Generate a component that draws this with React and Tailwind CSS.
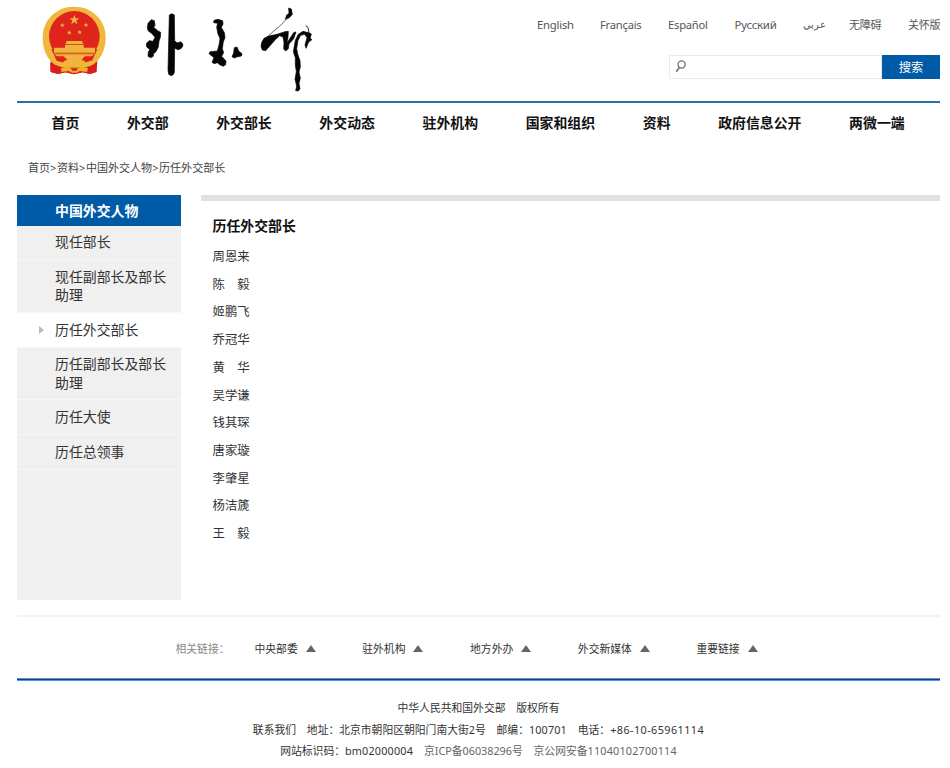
import React from 'react';

const languages = [
  { label: 'English', box: 'w-[63px] text-[11.3px]' },
  { label: 'Français', box: 'w-[68px] text-[11.2px]' },
  { label: 'Español', box: 'w-[66.5px] text-[11.2px]' },
  { label: 'Русский', box: 'w-[68.5px] text-[11.4px]' },
  { label: 'عربي', box: 'w-[46px] text-[9.5px]' },
  { label: '无障碍', box: 'w-[59px] text-[11px]' },
  { label: '关怀版', box: 'w-[34px] text-[11px]' },
];

const navItems = ['首页', '外交部', '外交部长', '外交动态', '驻外机构', '国家和组织', '资料', '政府信息公开', '两微一端'];

const sideItems = [
  { label: '现任部长' },
  { label: '现任副部长及部长助理' },
  { label: '历任外交部长', active: true },
  { label: '历任副部长及部长助理' },
  { label: '历任大使' },
  { label: '历任总领事' },
];

const ministers = ['周恩来', '陈　毅', '姬鹏飞', '乔冠华', '黄　华', '吴学谦', '钱其琛', '唐家璇', '李肇星', '杨洁篪', '王　毅'];

const footerLinks = ['中央部委', '驻外机构', '地方外办', '外交新媒体', '重要链接'];

const star = 'M0 -10 L2.4 -3.2 L9.5 -3.1 L3.8 1.2 L5.9 8.1 L0 4 L-5.9 8.1 L-3.8 1.2 L-9.5 -3.1 L-2.4 -3.2 Z';

function Emblem() {
  return (
    <svg className="block h-[90px] w-[90px]" viewBox="0 0 270 270" aria-hidden="true">
      <path d="M62 180 L88 198 L180 198 L202 178 L199 216 L180 222 L158 217 L132 223 L106 217 L84 222 L62 216 Z" fill="#d8211d" />
      <path d="M132 20 C187 20 227 60 227 113 C227 148 213 176 189 194 L165 203 L100 203 L74 194 C50 175 38 148 38 113 C38 60 78 20 132 20 Z" fill="#efb83c" />
      <ellipse cx="133" cy="109" rx="76" ry="76" fill="#df241c" />
      <path d="M64 148 L80 182 L108 190 L160 190 L187 181 L202 148 Z" fill="#df241c" />
      <g fill="#efb53c">
        <path d={star} transform="translate(133 60) scale(1.55)" />
        <path d={star} transform="translate(97 76) scale(.75)" />
        <path d={star} transform="translate(168 75) scale(.75)" />
        <path d={star} transform="translate(118 98) scale(.75)" />
        <path d={star} transform="translate(149 97) scale(.75)" />
        <path d="M110 123 H156 L160 132 H106 Z M105 134 H161 V143 H195 V158 H72 V143 H105 Z" />
      </g>
      <path d="M72 160 H195" stroke="#d99025" strokeWidth="2" />
      <path d="M72 163 H195 L184 169 H165 L151 184 H116 L101 169 H82 Z" fill="#efb53c" />
      <path d="M98 190 C104 174 118 182 133 182 C148 182 162 174 168 190 L152 194 H114 Z" fill="#efb53c" />
      <path d="M60 188 L88 200 L112 203 H154 L180 200 L202 188 L199 216 L180 222 L158 217 L132 223 L106 217 L84 222 L62 216 Z" fill="#d8211d" />
      <path d="M92 205 L112 198 L118 203 H148 L154 198 L174 205 L171 216 L150 213 L140 218 H126 L116 213 L95 216 Z" fill="#efb02c" />
      <path d="M122 205 H144 L139 212 H127 Z" fill="#d8211d" />
    </svg>
  );
}

function Calligraphy() {
  return (
    <svg className="block h-[100px] w-[200px]" viewBox="0 0 600 300" aria-hidden="true" fill="#050505" stroke="#050505" strokeWidth="2" strokeLinejoin="round">
      <path d="M64 59 L73 62 L75 76 L71 82 L83 92 L92 97 L91 112 L87 123 L85 141 L78 155 L70 162 L70 169 L62 173 L54 169 L55 157 L59 148 L50 141 L49 130 L58 122 L69 124 L75 112 L66 101 L55 93 L52 84 L54 70 Z" />
      <path d="M118 45 Q125 38 133 45 L134 122 Q141 133 151 125 Q162 130 158 139 Q154 149 143 149 L134 144 L133 216 Q132 226 123 227 L116 223 L114 211 Z" />
      <path d="M252 61 L264 58 L278 62 L279 72 L274 82 L283 98 L285 113 L280 125 L277 146 L281 158 L275 169 L288 183 L287 194 L280 199 L269 194 L262 188 L253 191 L246 187 L252 173 L237 161 L240 155 L262 153 L267 135 L270 116 L264 102 L260 82 L263 70 L251 68 Z" />
      <path d="M313 143 L321 141 L326 153 L336 161 L334 168 L320 171 L312 174 L306 170 L311 159 Z" />
      <path d="M476 24 L484 27 L487 43 L478 53 L466 58 L470 45 L477 40 Z" />
      <path d="M476 50 L452 76 L435 90 L410 112" fill="none" stroke="#333" strokeWidth="2.2" />
      <path d="M393 139 Q393 127 402 115 L417 108 L441 103 L465 95 L475 94 L474 111 L471 129 L485 107 L492 97 L498 96 L491 116 L477 132 L475 146 L467 153 L461 147 L462 128 L459 111 L449 107 L437 118 L420 137 L407 152 L397 150 Z" />
      <path d="M490 155 L496 121 L505 103 L519 94 L530 97 L535 97 L544 102 L541 113 L545 120 L536 126 L528 145 L525 135 L531 113 L524 103 L512 106 L504 121 L500 146 L503 162 L510 182 L511 201 L507 216 L511 235 L507 250 L510 266 L505 273 L497 272 L500 258 L495 238 L499 215 L496 195 L496 173 Z" />
      <path d="M527 77 L534 82 L537 98" fill="none" stroke="#333" strokeWidth="3" />
    </svg>
  );
}

function UpTriangle() {
  return <span className="ml-2 h-0 w-0 border-x-[5px] border-b-[7px] border-x-transparent border-b-[#666]" />;
}

export default function App() {
  return (
    <div className="flex h-[768px] w-[950px] flex-col overflow-hidden bg-white pl-[17px] pr-[10px] font-['Noto_Sans','Noto_Sans_CJK_SC',sans-serif] text-[#333]">
      <header className="flex h-[101px] shrink-0">
        <div className="pl-[13px]"><Emblem /></div>
        <div className="ml-[10px]"><Calligraphy /></div>
        <div className="ml-[207px] flex w-[405px] shrink-0 flex-col">
          <div className="mt-[15px] flex h-5 items-center text-[#555]">
            {languages.map((l) => (
              <span key={l.label} className={`${l.box} shrink-0 whitespace-nowrap leading-5 tracking-[-0.02em]`}>{l.label}</span>
            ))}
          </div>
          <div className="ml-[132px] mt-5 flex h-6 w-[271px]">
            <div className="flex w-[213px] items-start border border-[#ebebeb] pl-[5px] pt-1">
              <svg className="h-[13px] w-[13px]" viewBox="0 0 13 13" fill="none" stroke="#777" strokeWidth="1.3" aria-hidden="true">
                <circle cx="6.6" cy="4.4" r="3.6" />
                <path d="M4.4 7.4 L1.2 11.8" strokeWidth="1.7" />
              </svg>
            </div>
            <div className="flex w-[58px] items-center justify-center bg-[#005ba6] pt-[2px] text-[12.3px] leading-none text-white">搜索</div>
          </div>
        </div>
      </header>

      <nav className="flex h-[43px] shrink-0 items-center gap-[47.6px] border-t-2 border-[#2570a5] pb-[2px] pl-[34.5px] font-bold text-[#111]">
        {navItems.map((n) => (
          <span key={n} className="whitespace-nowrap text-[13.9px] leading-5">{n}</span>
        ))}
      </nav>

      <div className="mt-[14px] h-5 shrink-0 pl-[11px] text-[11.05px] leading-5 text-[#444]">
        首页<span className="mr-[0.5px]">&gt;</span>资料<span className="mr-[0.5px]">&gt;</span>中国外交人物<span className="mr-[0.5px]">&gt;</span>历任外交部长
      </div>

      <main className="mt-[17px] flex h-[405px] shrink-0">
        <aside className="w-[164px] shrink-0 bg-[#f0f0f0] text-[13.9px]">
          <h2 className="h-[30.5px] bg-[#005ba6] pl-[38px] font-bold leading-[31px] text-white">中国外交人物</h2>
          <ul>
            {sideItems.map((s) => (
              <li key={s.label} className={`flex border-b border-[#f7f7f7] pb-[7.5px] pt-[7.8px] leading-[18.3px] ${s.active ? 'bg-white' : ''}`}>
                <span className="flex h-[18px] w-[38px] shrink-0 items-center pl-[22px]">
                  {s.active && <span className="h-0 w-0 border-y-[4px] border-l-[5px] border-y-transparent border-l-[#bbb]" />}
                </span>
                <span className="w-[113px]">{s.label}</span>
              </li>
            ))}
          </ul>
        </aside>
        <section className="ml-5 flex-1 border-t-[6px] border-[#e1e1e1] pl-[11.5px] pt-[15px]">
          <h1 className="text-[13.9px] font-bold leading-5 text-[#111]">历任外交部长</h1>
          <ul className="mt-[7px]">
            {ministers.map((m) => (
              <li key={m} className="text-[12.4px] leading-[27.7px]">{m}</li>
            ))}
          </ul>
        </section>
      </main>

      <div className="mt-[15px] flex h-[63px] shrink-0 items-center border-t-2 border-[#f2f2f2] pl-[158.5px] pt-[2px] text-[10.8px] leading-4">
        <span className="w-[79px] text-[#888]">相关链接：</span>
        <div className="flex gap-[46.6px]">
          {footerLinks.map((f) => (
            <span key={f} className="flex items-center whitespace-nowrap">
              {f}
              <UpTriangle />
            </span>
          ))}
        </div>
      </div>
      <div className="h-[3px] shrink-0 border-y border-[#5f8fd6] bg-[#103f93]" />

      <footer className="mt-4 flex flex-col items-center text-[10.8px] leading-[21.7px]">
        <p className="whitespace-pre">中华人民共和国外交部　版权所有</p>
        <p className="whitespace-pre">联系我们　地址：北京市朝阳区朝阳门南大街2号　邮编：<span className="tracking-[0.15px]">100701</span>　电话：<span className="tracking-[0.45px]">+86-10-65961114</span></p>
        <p className="whitespace-pre">网站标识码：<span className="tracking-[0.2px]">bm02000004</span>　<span className="text-[#666]">京ICP备06038296号　京公网安备<span className="tracking-[0.2px]">11040102700114</span></span></p>
      </footer>
    </div>
  );
}
